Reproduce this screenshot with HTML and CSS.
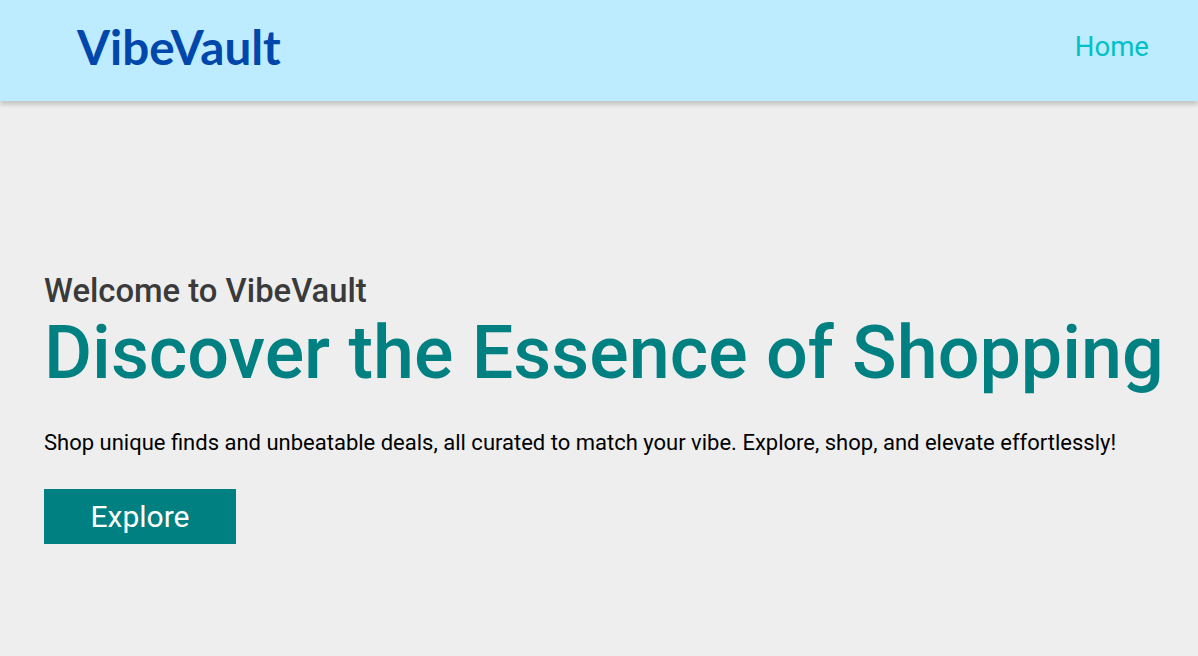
FILE: index.html
```html
<!DOCTYPE html>
<html lang="en">
<head>
<meta charset="utf-8">
<title>VibeVault</title>
<link rel="stylesheet" href="styles.css">
</head>
<body>
<header class="site-header">
  <div class="logo">VibeVault</div>
  <nav class="nav"><a href="#" class="nav-link">Home</a></nav>
</header>
<main class="hero">
  <h2 class="hero-kicker">Welcome to VibeVault</h2>
  <h1 class="hero-title">Discover the Essence of Shopping</h1>
  <p class="hero-text">Shop unique finds and unbeatable deals, all curated to match your vibe. Explore, shop, and elevate effortlessly!</p>
  <a href="#" class="hero-btn">Explore</a>
</main>
</body>
</html>
```
FILE: styles.css
```css
* { box-sizing: border-box; }
html, body { margin: 0; padding: 0; }
body {
  background: #eeeeee;
  font-family: Roboto, "Liberation Sans", sans-serif;
  height: 656px;
  overflow: hidden;
}
.site-header {
  height: 101px;
  background: #bdebff;
  display: flex;
  align-items: center;
  justify-content: space-between;
  padding: 0 49px 0 77px;
  box-shadow: 0 4px 4px rgba(0, 0, 0, 0.16);
  position: relative;
  z-index: 1;
}
.logo {
  font-family: Lato, sans-serif;
  font-weight: 700;
  font-size: 47.6px;
  line-height: normal;
  color: #0047ab;
  margin-bottom: 8px;
}
.nav-link {
  display: block;
  font-family: Roboto, sans-serif;
  font-size: 27.6px;
  line-height: normal;
  color: #00c0c8;
  text-decoration: none;
  margin-bottom: 8px;
}
.hero {
  padding: 171px 30px 0 44px;
}
.hero-kicker {
  margin: 0;
  font-size: 32.8px;
  font-weight: 500;
  color: #3a3a3a;
  line-height: 38px;
}
.hero-title {
  margin: 0;
  font-size: 73.7px;
  font-weight: 500;
  color: #008080;
  line-height: normal;
  white-space: nowrap;
}
.hero-text {
  margin: 34px 0 0;
  font-size: 22px;
  color: #000;
  line-height: normal;
}
.hero-btn {
  display: flex;
  align-items: center;
  justify-content: center;
  margin-top: 34px;
  width: 192px;
  height: 55px;
  background: #008080;
  color: #fff;
  font-size: 30px;
  text-decoration: none;
}
```
